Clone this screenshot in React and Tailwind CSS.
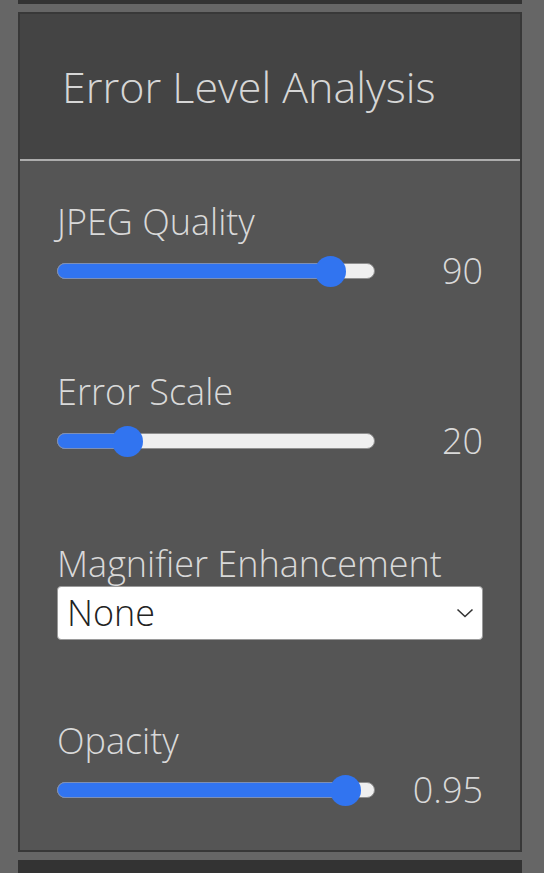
import React from "react";

const font = { fontFamily: '"Open Sans", "Liberation Sans", sans-serif' };

function Slider({ min, max, value }) {
  // thumb travels between the track ends minus its radius
  const pct = (value - min) / (max - min);
  const center = 15.5 + pct * (318 - 31);
  return (
    <div className="relative w-[318px] h-[32px] shrink-0">
      <div className="absolute left-0 right-0 top-[8px] h-[16px] rounded-full bg-[#efefef] border border-[#8f8f8f]" />
      <div
        className="absolute left-0 top-[8px] h-[16px] rounded-full bg-[#3174f0] border border-[#7d8fb5]"
        style={{ width: center + 4 }}
      />
      <div
        className="absolute top-[0.5px] w-[31px] h-[31px] rounded-full bg-[#3174f0]"
        style={{ left: center - 15.5 }}
      />
    </div>
  );
}

function SliderRow({ label, min, max, value, text, className }) {
  return (
    <div className={className}>
      <div className="text-[36px] leading-[44px] font-light text-[#d9d9d9]">{label}</div>
      <div className="flex items-center mt-[11px]">
        <Slider min={min} max={max} value={value} />
        <div className="flex-1 text-right text-[36px] leading-[32px] font-light text-[#d9d9d9]">
          {text}
        </div>
      </div>
    </div>
  );
}

export default function App() {
  return (
    <div className="min-h-screen w-full bg-[#666666] pl-[18px] pr-[22px] overflow-hidden" style={font}>
      <div className="h-[4px] bg-[#333333]" />
      <div className="mt-[8px] border-2 border-[#383838] bg-[#555555]">
        <div className="h-[145px] bg-[#444444] pl-[42px] text-[43px] leading-[145px] font-light text-[#d6d6d6]">
          Error Level Analysis
        </div>
        <div className="h-[2px] bg-[#adadad]" />
        <div className="px-[37px] pt-[39px] pb-[44px]">
          <SliderRow label="JPEG Quality" min={0} max={100} value={90} text="90" />
          <SliderRow className="mt-[83px]" label="Error Scale" min={1} max={100} value={20} text="20" />
          <div className="mt-[85px]">
            <div className="text-[36px] leading-[44px] font-light text-[#d9d9d9]">
              Magnifier Enhancement
            </div>
            <div className="h-[54px] bg-white border border-[#9a9a9a] rounded-[4px] flex items-center justify-between pl-[9px] pr-[8px]">
              <span className="text-[36px] leading-none font-light text-[#222222]">None</span>
              <svg width="18" height="10" viewBox="0 0 18 10" fill="none">
                <path d="M1.5 1.5 L9 8.5 L16.5 1.5" stroke="#333" strokeWidth="1.6" />
              </svg>
            </div>
          </div>
          <SliderRow className="mt-[79px]" label="Opacity" min={0} max={1} value={0.95} text="0.95" />
        </div>
      </div>
      <div className="mt-[8px] h-[40px] bg-[#333333]" />
    </div>
  );
}
